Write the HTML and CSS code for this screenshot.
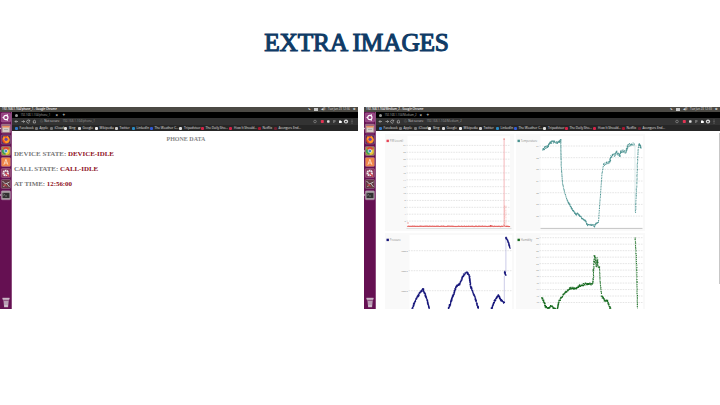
FILE: index.html
```html
<!DOCTYPE html>
<html lang="en">
<head>
<meta charset="utf-8">
<title>Extra Images</title>
<link rel="stylesheet" href="styles.css">
</head>
<body>
<h1>EXTRA IMAGES</h1>
<main class="shots">
  <section class="desktop">
    <header class="menubar"><span>192.168.1.104/phone_1 - Google Chrome</span><span class="tray"><b>⬉</b><i></i><b>◀))</b><span>Tue Jun 23 12:56</span><b>✿</b></span></header>
    <div class="workspace">
      <nav class="launcher"></nav>
      <div class="browser">
        <div class="tabs"><i class="globe"></i><span class="tabname">192.168.1.104/phone_1</span><b>×</b><b>+</b></div>
        <div class="address"></div>
        <div class="bookmarks"></div>
        <article class="page phone">
          <h2>PHONE DATA</h2>
          <p>DEVICE STATE: <strong>DEVICE-IDLE</strong></p>
          <p>CALL STATE: <strong>CALL-IDLE</strong></p>
          <p>AT TIME: <strong>12:56:00</strong></p>
        </article>
      </div>
    </div>
  </section>
  <section class="desktop">
    <header class="menubar"><span>192.168.1.104/Medium_2 - Google Chrome</span><span class="tray"><b>⬉</b><i></i><b>◀))</b><span>Tue Jun 23 12:59</span><b>✿</b></span></header>
    <div class="workspace">
      <nav class="launcher"></nav>
      <div class="browser">
        <div class="tabs"><i class="globe"></i><span class="tabname">192.168.1.104/Medium_2</span><b>×</b><b>+</b></div>
        <div class="address"></div>
        <div class="bookmarks"></div>
        <article class="page charts">
          <svg id="pir" viewBox="385.5 134 129 97"></svg>
          <svg id="temperature" viewBox="516.5 134 129 97"></svg>
          <svg id="pressure" viewBox="385.5 233 129 76"></svg>
          <svg id="humidity" viewBox="516.5 233 129 76"></svg>
          <i class="scroll"></i>
        </article>
      </div>
    </div>
  </section>
</main>
<script src="script.js"></script>
</body>
</html>
```
FILE: styles.css
```css
* { box-sizing: border-box; }
body { margin: 0; width: 720px; height: 405px; background: #fff; overflow: hidden; }
h1 {
  margin: 0; height: 107px; padding: 26px 0 0; text-align: center; text-indent: -7px;
  font: 400 25.4px/32px "Liberation Serif", serif; letter-spacing: -.2px;
  color: #0f3b66; -webkit-text-stroke: 1.1px #0f3b66;
}
.shots { display: flex; gap: 6px; height: 202px; }
.desktop { width: 358px; height: 202px; flex: none; overflow: hidden; font: 3.2px/5px "Open Sans", sans-serif; color: #ccc; }
.desktop + .desktop { width: 356px; }
.menubar { height: 5px; display: flex; justify-content: space-between; background: #4b4944; padding: 0 2px; color: #eee; font-weight: 600; font-size: 2.85px; white-space: nowrap; }
.tray { display: flex; gap: 3px; align-items: center; font-weight: 400; color: #ddd; }
.tray i { width: 4px; height: 3.5px; background: #ccc; }
.workspace { display: flex; height: 197px; }
.launcher { width: 12.4px; flex: none; background: #651052; border-right: .6px solid #8c4c7d; display: flex; }
.launcher svg { width: 11px; height: 197px; flex: none; }
.browser { flex: 1; min-width: 0; }
.tabs { height: 6px; background: #000; display: flex; align-items: center; padding-left: 3px; color: #aaa; }
.tabs .globe { width: 3px; height: 3px; border-radius: 50%; background: #999; margin-right: 2px; }
.tabname { width: 35px; font-size: 2.75px; white-space: nowrap; }
.tabs b { width: 7px; font-size: 4.5px; color: #ccc; }
.address { height: 7px; background: #333; display: flex; align-items: center; justify-content: space-between; padding: 0 4px 0 2px; }
.address svg { width: 22px; height: 7px; flex: none; }
.address span { flex: 1; padding-left: 4px; font-size: 3px; color: #999; }
.address em { font-style: normal; color: #ccc; margin-right: 3px; }
.address svg.tools { width: 43px; }
.bookmarks { height: 6px; background: #262626; display: flex; align-items: center; padding-left: 2.6px; white-space: nowrap; font-size: 3.15px; }
.bookmarks span { display: flex; align-items: center; gap: 1.6px; flex: none; color: #e0e0e0; }
.bookmarks i { width: 3px; height: 3px; border-radius: 1px; flex: none; }
.page { height: 178px; background: #fff; position: relative; }
.phone { font-family: "Liberation Serif", serif; font-weight: 700; color: #777; padding: 5px 0 0 1.5px; }
.phone h2 { margin: 0 0 8px; font-size: 6px; font-weight: 700; line-height: 6px; text-align: center; color: #858585; }
.phone p { margin: 0 0 7px; font-size: 6.95px; line-height: 8px; letter-spacing: -.03px; }
.phone strong { color: #8e1024; }
.charts { display: grid; grid-template-columns: 129px 129px; grid-template-rows: 97px 76px; gap: 2px; padding: 3px 0 0 9px; }
.charts svg { width: 100%; height: 100%; background: #f9f9f9; font: 2.7px "Open Sans", sans-serif; }
.scroll { position: absolute; right: 0; top: 2px; width: 1px; height: 151px; background: #c7c7c7; }
```
FILE: script.js
```js
const dock = `<svg viewBox="0 0 11 197" preserveAspectRatio="none">
<g stroke="#b289a8" stroke-width=".4">
<rect x="1.3" y="1" width="9.2" height="9" rx="1" fill="#963f81"/>
<rect x="1.3" y="12" width="9.2" height="9" rx="1" fill="#9b6d7d"/>
<rect x="1.3" y="23" width="9.2" height="9" rx="1" fill="#54305f"/>
<rect x="1.3" y="34.5" width="9.2" height="9" rx="1" fill="#9a874e"/>
<rect x="1.3" y="45.5" width="9.2" height="9" rx="1" fill="#ee8448"/>
<rect x="1.3" y="56.5" width="9.2" height="9" rx="1" fill="#8c3a60"/>
<rect x="1.3" y="67.5" width="9.2" height="9" rx="1" fill="#633c44"/>
<rect x="1.3" y="78.8" width="9.2" height="9" rx="1" fill="#aaa1a6"/></g>
<g transform="translate(.5 0)">
<circle cx="5.4" cy="5.5" r="2.1" fill="none" stroke="#fff" stroke-width="1.1"/>
<g fill="#fff"><circle cx="2.7" cy="5.5" r=".8"/><circle cx="6.8" cy="3" r=".8"/><circle cx="6.8" cy="8" r=".8"/></g>
<rect x="2" y="14" width="7" height="6" fill="#d5cdc5"/><path d="M2 14h7v1.5H2z" fill="#ee8d5b"/><path d="M3.5 17.5h4" stroke="#999" stroke-width=".7"/>
<circle cx="5.4" cy="27.7" r="3.7" fill="#e94b25"/><path d="M2.2 27l1-3 2 2 2-2.3 2 3.5q0 4-3.8 4z" fill="#ff9b25"/><circle cx="5.6" cy="27.3" r="1.6" fill="#6945a8"/>
<circle cx="5.4" cy="39" r="3.9" fill="#eac735"/><path d="M2 37a3.9 3.9 0 0 1 7 0L5.4 39z" fill="#d94a36"/><path d="M2 37a3.9 3.9 0 0 0 3 5.9L5.4 39z" fill="#399e53"/><circle cx="5.4" cy="39" r="1.8" fill="#4b87cf" stroke="#fff" stroke-width=".6"/>
<path d="M3.4 52.8l2-5.5 2 5.5M4 51h2.8" fill="none" stroke="#ffe5d2" stroke-width=".8"/>
<circle cx="5.2" cy="61" r="2.3" fill="none" stroke="#eee" stroke-width="2" stroke-dasharray="1.4 .4"/><path d="M5 61l3.5 3.5" stroke="#d55" stroke-width="1.3"/>
<path d="M2 69l3 3 4-2M3 75l3-4 3 4" fill="none" stroke="#bbb" stroke-width="1"/><path d="M2 73l3-1 2 3z" fill="#b84848"/>
<rect x="2" y="80.8" width="7" height="5.3" fill="#303030"/><path d="M3 82l1 .8-1 .8M4.8 84h1.5" fill="none" stroke="#ddd" stroke-width=".5"/>
<path d="M1.8 186.5h7.4l-.8 2H2.6zM3 189h5.2l-.6 6.3h-4z" fill="#ba9eb5"/><path d="M2 186.3h7M3.8 194h3.5" stroke="#eee" stroke-width=".8"/></g>
<path d="M0 15.5l1 1-1 1M0 38l1 1-1 1M0 82l1 1-1 1" fill="#eee"/>
</svg>`;
document.querySelectorAll('.launcher').forEach(n => n.innerHTML = dock);
document.querySelectorAll('.address').forEach((n, i) => n.innerHTML = `
<svg viewBox="0 0 22 7" fill="none" stroke="#ccc" stroke-width=".6"><path d="M4 3.5H1m1.3-1.3L1 3.5l1.3 1.3M7.5 3.5h3M9.3 2.2l1.2 1.3-1.2 1.3" /><path d="M15.5 2.8a1.5 1.5 0 1 0 0 1.5M15.7 1.8v1.3h-1.3M18.8 3.5L20.5 2l1.5 1.5M19.4 3.3V5h2V3.3"/></svg>
<span>ⓘ <em>Not secure</em>192.168.1.104/${i ? 'Medium_2' : 'phone_1'}</span>
<svg class="tools" viewBox="0 0 43 7"><circle cx="4" cy="3.5" r="1.3" fill="none" stroke="#aaa" stroke-width=".5"/><rect x="9.8" y="2" width="3" height="3" rx=".7" fill="#e23353"/><rect x="16" y="2.2" width="2.6" height="2.6" rx=".7" fill="#ddd"/><path d="M22 2.5h2.5M22 3.5h2.5M22 4.5h1.5" stroke="#aaa" stroke-width=".5"/><path d="M28 2.5h2v2.5h-2zM30 3.3h1v1.4h-1z" fill="#fff"/><circle cx="35" cy="3.5" r="2.1" fill="#ddd"/><path d="M34 3l1 2 .8-2" fill="#111"/><path d="M41 1.7v.7M41 3.2v.7M41 4.7v.7" stroke="#bbb" stroke-width=".7"/></svg>`);
const marks = [['Facebook','#3478c6',20],['Apple','#777',15],['iCloud','#777',14.5],['Bing','#ddd',13.5],['Google','#ddd',17],['Wikipedia','#eee',20],['Twitter','#ccc',17],['LinkedIn','#298bc4',18],['The Weather C...','#315ad4',29.5],['Tripadvisor','#ddd',21.5],['The Daily Sho...','#d32348',28.5],['How It Should...','#d32348',28.5],['Netflix','#a71930',16],['Avengers End...','#6e2030',26]];
document.querySelectorAll('.bookmarks').forEach(n => {
  n.innerHTML = marks.map(([t, c, w]) => `<span style="width:${w}px"><i style="background:${c}"></i>${t}</span>`).join('');
});

let seed = 7;
const rnd = () => (seed = (seed * 16807) % 2147483647) / 2147483647 - .5;
function dots(points, color, step, noise, size = 1) {
  let s = '';
  for (let i = 1; i < points.length; i++) {
    const [a, b] = points[i - 1], [c, d] = points[i];
    const n = Math.max(1, Math.round(Math.hypot(c - a, d - b) / step));
    for (let k = 0; k < n; k++) {
      const x = a + (c - a) * k / n + rnd() * noise * .4, y = b + (d - b) * k / n + rnd() * noise;
      s += `M${(x - size / 2).toFixed(2)} ${y.toFixed(2)}h${size}`;
    }
  }
  return `<path d="${s}" stroke="${color}" stroke-width="${size}" fill="none"/>`;
}
function frame(x, top, height, title, color, rows, tx) {
  let s = `<rect x="${x}" y="${top}" width="102.5" height="${height}" fill="#fff"/>`;
  s += `<rect x="${tx}" y="${top + 3.7}" width="2.4" height="2.4" fill="${color}"/><text x="${tx + 3.3}" y="${top + 6}" fill="#888">${title}</text>`;
  rows.forEach(([y, label]) => s += `<path d="M${x - 1} ${y}H${x + 102.5}" stroke="#d3d3d3" stroke-width=".6" stroke-dasharray="1.6 1"/><text x="${x - 1.7}" y="${y + .9}" text-anchor="end" fill="#777" font-size="2.2">${label}</text>`);
  return s;
}
const put = (id, s) => document.getElementById(id).innerHTML = s;
put('pir', frame(408, 136, 93, 'PIR (event)', '#e64458', Array.from({length: 12}, (_, i) => [145.4 + i * 6.88, 24 - i * 2]), 387)
 + '<path d="M407 228.4H512" stroke="#ccc" stroke-width=".7"/><path d="M504.6 139V225" stroke="#f09a9c" stroke-width=".7"/><path d="M408 226.4H504M504 225l2 1.5 4.5 0" stroke="#e75a56" stroke-width=".9" fill="none"/>'
 + dots([[408,226.1],[511,226.3]], '#df5553', .8, .9, .7) + dots([[505,206],[505,226]], '#ee7773', 2, .5, .7) + dots([[506.4,206],[506.4,226]], '#ee7773', 2, .5, .7) + '<path d="M408 223h1M504 139h1.2M490.5 225.5h1.5" stroke="#df5553"/>');
put('temperature', frame(541, 136, 93, 'Temperature', '#4a9290', Array.from({length: 7}, (_, i) => [146 + i * 11.68, 34 - i]), 518)
 + '<path d="M541 228.4H643" stroke="#aaa" stroke-width=".7"/><path d="M635.5 145V212M561 142V160" stroke="#b9d6d5" stroke-width=".5"/>'
 + dots([[543,150],[546,147.5],[548,147],[551,142],[560,142.3],[561.3,140]], '#4a9290', .35, 2.4, 1)
 + dots([[561.3,140],[561.7,165],[563,183],[565,192],[568,201]], '#4a9290', 1.3, .4, 1)
 + dots([[568,201],[573,210],[577,215],[578,213],[583,219],[586,221],[588,225],[593,225],[595,226.5],[597,223],[599,222.5]], '#4a9290', .5, 1.3, 1)
 + dots([[599,222],[600,207],[601.5,188],[602.5,174],[604,165]], '#4a9290', 1.6, .4, 1)
 + dots([[604,165],[606,164],[610,162],[612,156],[615,155],[617,152],[620,156],[622,151],[626,152],[629,145],[635,144]], '#4a9290', .35, 2.6, .9)
 + dots([[636,212],[637,190],[638,162],[639,146],[641.5,145]], '#4a9290', 1.5, 1, 1)
 + dots([[639.5,144],[641.5,148]], '#4a9290', .3, 2, 1));
put('pressure', frame(410, 235, 74, 'Pressure', '#17177b', [[250.7,'1006.0'],[270.7,'1005.5'],[290.7,'1005.0']], 387)
 + '<path d="M504.8 276V303M506.4 238V272" stroke="#a7a7d6" stroke-width=".6"/>'
 + dots([[412.5,309],[417,298],[421,292],[423.5,289],[427,298],[430,309]], '#17177b', .35, 1.8, 1.2)
 + dots([[449,309],[453,297],[457,286],[460,284],[464,275],[467,272],[470,276],[471,286],[475,296],[479,309]], '#17177b', .35, 1.8, 1.2)
 + dots([[492,309],[495,301],[499,295.5],[502,301],[505,303]], '#17177b', .35, 1.8, 1.2)
 + dots([[505,272],[506.3,275]], '#17177b', .25, 2, 1.1) + dots([[506.3,237.5],[508.5,241],[510.5,248]], '#17177b', .35, 1.4, 1.2));
put('humidity', frame(541, 235, 74, 'Humidity', '#176b20', Array.from({length: 11}, (_, i) => [237.7 + i * 6.48, 60 - i * 2]), 518)
 + '<path d="M635.7 238L638 309" stroke="#8db792" stroke-width=".6"/>'
 + dots([[542.5,298],[545,303],[546,307],[549,308],[552,306],[555,309],[558,309],[559,302],[562,297],[566,292],[571,288],[576,289],[580,286],[586,284],[593,284]], '#176b20', .35, 2, 1.1)
 + dots([[593.5,284],[594,268],[595,255],[596,261],[597,267],[597.6,259],[599,268],[600,267]], '#176b20', .65, 3, .9)
 + dots([[600,267],[600.5,280],[602,295]], '#176b20', 1.3, .6, 1)
 + dots([[602,296],[605,300],[608,301],[611,309]], '#176b20', .35, 1.8, 1.1)
 + dots([[635.7,238],[636.8,255],[637.5,275],[638,309]], '#176b20', 2, 1, 1));
```
